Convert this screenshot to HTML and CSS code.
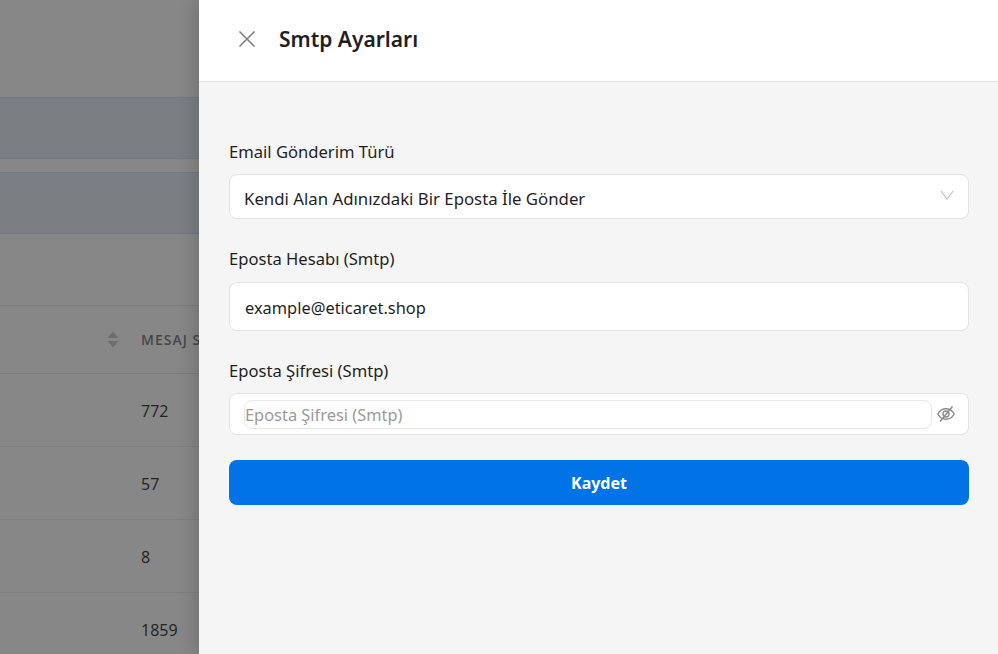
FILE: index.html
```html
<!DOCTYPE html>
<html lang="tr">
<head>
<meta charset="utf-8">
<title>Smtp Ayarları</title>
<link rel="stylesheet" href="styles.css">
</head>
<body>
<div class="page">
  <div class="backdrop">
    <div class="band band-first"></div>
    <div class="band band-second"></div>
    <div class="table">
      <div class="row row-head">
        <svg class="sort" width="12" height="17" viewBox="0 0 12 17"><path d="M6 0.500 11.500 7H0.500Z M0.500 10H11.500L6 16.500Z" fill="#6f6f6f"/></svg>
        <span class="th">MESAJ SAYISI</span>
      </div>
      <div class="row"><span class="td">772</span></div>
      <div class="row"><span class="td">57</span></div>
      <div class="row"><span class="td">8</span></div>
      <div class="row"><span class="td">1859</span></div>
    </div>
  </div>
  <aside class="drawer">
    <header class="drawer-head">
      <svg class="close" width="18" height="18" viewBox="0 0 18 18"><path d="M1.500 1.500 16.500 16.500M16.500 1.500 1.500 16.500" stroke="#7b7b7b" stroke-width="1.500" fill="none"/></svg>
      <h1 class="title">Smtp Ayarları</h1>
    </header>
    <form class="form">
      <label class="label label-first">Email Gönderim Türü</label>
      <div class="field field-select">
        <span class="value-select">Kendi Alan Adınızdaki Bir Eposta İle Gönder</span>
        <svg class="chevron" width="14" height="10" viewBox="0 0 14 10"><path d="M0.800 0.800 7 9 13.200 0.800" stroke="#c4c4c4" stroke-width="1.100" fill="none"/></svg>
      </div>
      <label class="label label-second">Eposta Hesabı (Smtp)</label>
      <div class="field field-input"><span class="value">example@eticaret.shop</span></div>
      <label class="label label-third">Eposta Şifresi (Smtp)</label>
      <div class="field field-password">
        <div class="inner"><span class="placeholder">Eposta Şifresi (Smtp)</span></div>
        <svg class="eye" width="18" height="16" viewBox="0 0 18 16"><path d="M0.800 8C2.800 4.400 5.800 2.800 9 2.800S15.200 4.400 17.200 8C15.200 11.600 12.200 13.200 9 13.200S2.800 11.600 0.800 8Z" stroke="#8a8a8a" stroke-width="1.400" fill="none"/><circle cx="9" cy="8" r="3" stroke="#8a8a8a" stroke-width="1.400" fill="none"/><path d="M3 15.500 15.500 0.500" stroke="#8a8a8a" stroke-width="1.500"/></svg>
      </div>
      <button class="submit" type="button">Kaydet</button>
    </form>
  </aside>
</div>
</body>
</html>
```

FILE: styles.css
```css
* { box-sizing: border-box; }
html, body { margin: 0; height: 100%; overflow: hidden; }
body { font-family: "Noto Sans", "Open Sans", sans-serif; color: #1f1f1f; }
.page { display: flex; width: 998px; height: 654px; overflow: hidden; }
.backdrop { width: 199px; flex: none; background: #878787; padding-top: 97px; overflow: hidden; }
.band { height: 62px; background: #7b7f84; border-top: 1px solid #6c7a8c; border-bottom: 1px solid #6c7a8c; }
.band-first { margin-bottom: 13px; }
.table { margin-top: 71px; border-top: 1px solid #7d7d7d; }
.row { height: 73px; border-bottom: 1px solid #7f7f7f; display: flex; align-items: center; padding: 2px 0 0 141px; position: relative; width: 320px; }
.row-head { height: 68px; padding-top: 0; border-bottom-color: #7b7b7b; }
.sort { position: absolute; left: 107px; top: 25px; }
.th { font-family: "Open Sans", sans-serif; font-size: 14px; font-weight: 600; color: #474747; letter-spacing: 1px; white-space: nowrap; }
.td { font-family: "Open Sans", sans-serif; font-size: 16px; color: #222; }
.drawer { flex: 1; background: #f5f5f5; box-shadow: -6px 0 16px rgba(0,0,0,0.14); position: relative; }
.drawer-head { height: 82px; background: #fff; border-bottom: 1px solid #e4e4e4; display: flex; align-items: center; padding: 0 0 4px 39px; gap: 23px; }
.title { margin: 0; font-size: 21px; font-weight: 600; color: #1f1f1f; }
.form { padding: 0 29px 0 30px; display: flex; flex-direction: column; }
.label { font-size: 16.600px; line-height: 22px; color: #1f1f1f; }
.label-first { margin-top: 59px; }
.label-second { margin-top: 29px; }
.label-third { margin-top: 29px; }
.field { background: #fff; border: 1px solid #e3e3e3; border-radius: 8px; display: flex; align-items: center; }
.field-select { height: 45px; margin-top: 11px; padding: 4px 14px 0; justify-content: space-between; }
.value-select { font-size: 16.800px; }
.chevron { margin: -7px 0 0; }
.field-input { height: 49px; margin-top: 12px; padding: 2px 15px 0; }
.value { font-size: 16.400px; }
.field-password { height: 42px; margin-top: 11px; padding: 0 13px 0 14px; gap: 5px; }
.inner { flex: 1; height: 29px; border: 1px solid #e6e6e6; border-radius: 8px; display: flex; align-items: center; padding-top: 1px; }
.placeholder { font-size: 16.400px; color: #9a9a9a; }
.submit { margin-top: 25px; height: 45px; border: 0; border-radius: 8px; background: #0073e6; color: #fff; font-family: inherit; font-size: 16px; font-weight: 700; }
```
